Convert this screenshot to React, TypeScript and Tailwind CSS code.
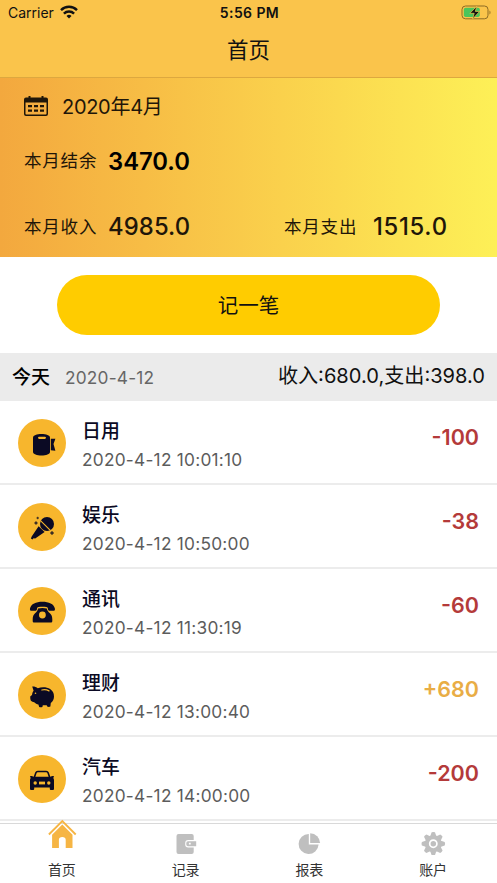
import type { ReactNode } from "react";
import clsx from "clsx";

const INK = "#0b0a24";
const AMBER = "#f7b62d";

type Entry = {
  name: string;
  time: string;
  amount: string;
  income?: boolean;
  icon: ReactNode;
};

const RollIcon = () => (
  <>
    <path d="M15 18.600c0-2.300 4-3.600 8.500-3.600s8.500 1.300 8.500 3.600V33c0 2.300-4 3.500-8.500 3.500S15 35.300 15 33Z" fill={INK} />
    <rect x="20" y="17.700" width="8" height="2.300" rx="1.150" fill={AMBER} />
    <path d="M32.800 19.800h4.600l-1.900 5.200 1.900 6.800-4.600-.6Z" fill={INK} />
  </>
);

const MicIcon = () => (
  <>
    <circle cx="29" cy="21" r="7" fill={INK} />
    <path d="m22.500 17.600 9.800 9.800" stroke={AMBER} strokeWidth="1.100" />
    <path d="m20.600 23.200 6 5.800-9.400 6.600-1.700-.3-1 1.300-1.600-1 .8-2Z" fill={INK} />
    <path d="m18 18.300.5 1.200 1.200.5-1.200.5-.5 1.200-.5-1.200-1.200-.5 1.200-.5ZM19.700 13.800l.3.900.9.300-.9.300-.3.900-.3-.9-.9-.3.900-.3ZM34 28l.5 1.500 1.500.5-1.500.5-.5 1.500-.5-1.500-1.500-.5 1.500-.5Z" fill={INK} stroke={INK} strokeWidth=".4" />
  </>
);

const PhoneIcon = () => (
  <>
    <path d="M12 21.500c1-4.700 6-6.800 12.400-6.800s11.500 2.100 12.500 6.800c.3 1.600-.3 2.300-1.500 2.300h-3.600c-1.200 0-1.800-.8-1.900-2.100-.1-1.100-.6-1.500-1.600-1.700-2.400-.4-5.300-.4-7.700 0-1 .2-1.500.6-1.600 1.700-.1 1.300-.7 2.100-1.900 2.100h-3.600c-1.200 0-1.800-.7-1.500-2.300Z" fill={INK} />
    <path d="M20 21.400q4.400-.9 8.800 0c.4 2 1.400 3.300 3.100 4.800 1.700 1.500 2.400 3.400 2.400 6v1.700c0 1-.6 1.600-1.600 1.600H16.300c-1 0-1.600-.6-1.600-1.600v-1.700c0-2.600.7-4.500 2.400-6 1.700-1.500 2.600-2.800 2.900-4.800Z" fill={INK} />
    <circle cx="24.400" cy="28" r="3.400" fill={AMBER} />
  </>
);

const PigIcon = () => (
  <>
    <path d="M14.200 15.500c2-.1 4.200.4 5.600 1.700 3.800-1.500 9.200-1.300 12.300.9 2.500 1.700 3.900 4.200 3.900 7.300 0 2.800-1.200 5-3.200 6.700l-.4 3.400q-1.600.8-3.200 0l-.5-1.300h-3.900l-.4 1.800q-1.600.7-3.200 0l-.8-2.400c-1.500-.4-3-1.100-4.200-2.400q-1.900-.5-3.300-1.500-.8-2-.7-4.200l1.800-1.400c.2-1.600.5-3.100 1.600-4.400Z" fill={INK} />
    <path d="M23.800 19c2.400-.6 5-.3 7.200.9" stroke={AMBER} strokeWidth="1.200" strokeLinecap="round" fill="none" />
    <circle cx="17.500" cy="22.300" r=".8" fill={AMBER} />
  </>
);

const CarIcon = () => (
  <>
    <path d="M16.300 22.500 17.900 17.800c.3-.9.900-1.300 1.900-1.300h8.400c1 0 1.600.4 1.900 1.300l1.600 4.700" fill="none" stroke={INK} strokeWidth="1.600" />
    <path d="M12 21.300c1.200-.5 2.500-.3 3.500.5h17c1-.8 2.300-1 3.500-.5l-.7 1.600c.6.900.7 1.600.7 2.700v8.100c0 .9-.5 1.400-1.400 1.400h-1.400c-.9 0-1.400-.5-1.400-1.400V32.500H16.200v1.200c0 .9-.5 1.400-1.400 1.400h-1.400c-.9 0-1.400-.5-1.400-1.400v-8.100c0-1.100.1-1.800.7-2.700Z" fill={INK} />
    <circle cx="17.200" cy="28" r="1.700" fill={AMBER} />
    <circle cx="30.800" cy="28" r="1.700" fill={AMBER} />
    <path d="M21 26.600h6v2.800h-6Z" fill={AMBER} />
  </>
);

const ENTRIES: Entry[] = [
  { name: "日用", time: "2020-4-12 10:01:10", amount: "-100", icon: <RollIcon /> },
  { name: "娱乐", time: "2020-4-12 10:50:00", amount: "-38", icon: <MicIcon /> },
  { name: "通讯", time: "2020-4-12 11:30:19", amount: "-60", icon: <PhoneIcon /> },
  { name: "理财", time: "2020-4-12 13:00:40", amount: "+680", income: true, icon: <PigIcon /> },
  { name: "汽车", time: "2020-4-12 14:00:00", amount: "-200", icon: <CarIcon /> },
];

const TABS: { label: string; icon: ReactNode }[] = [
  {
    label: "首页",
    icon: (
      <>
        <path d="M1.900 15.500 15.300 2.100l13.400 13.400" fill="none" stroke="#f6b544" strokeWidth="1.900" />
        <path d="M5.100 15.700 15.300 5.500l10.200 10.200V29H18.700v-8.200c0-1.900-1.300-2.800-3.400-2.800s-3.400.9-3.400 2.800v8.200H5.100Z" fill="#f6b544" />
      </>
    ),
  },
  {
    label: "记录",
    icon: (
      <>
        <path d="M7.500 15h13.200a2 2 0 0 1 2 2v4h-5.500a3 3 0 0 0-3 3v1.600a3 3 0 0 0 3 3h5.500V33a2 2 0 0 1-2 2H7.500a2 2 0 0 1-2-2V17a2 2 0 0 1 2-2Z" fill="#bfbfbf" />
        <path fillRule="evenodd" d="M17 22.200h8.200v5H17a1.700 1.700 0 0 1-1.700-1.700v-1.600a1.700 1.700 0 0 1 1.700-1.700Zm.9 1.600v1.800h1.800v-1.800Z" fill="#bfbfbf" />
      </>
    ),
  },
  {
    label: "报表",
    icon: (
      <>
        <path d="M14.800 15v10.600h9.800A10 10 0 1 1 14.800 15Z" fill="#bfbfbf" />
        <path d="M16.200 14.200a10 10 0 0 1 9.900 9.900h-9.900Z" fill="#bfbfbf" />
      </>
    ),
  },
  {
    label: "账户",
    icon: (
      <g transform="translate(15.300 24.700)">
        {[0, 45, 90, 135, 180, 225, 270, 315].map((deg) => (
          <path key={deg} d="M-3.200-7-1.700-11.400Q0-12.200 1.700-11.400L3.200-7Z" fill="#bfbfbf" transform={`rotate(${deg})`} />
        ))}
        <circle r="8.400" fill="#bfbfbf" />
        <circle r="3.600" fill="none" stroke="#fff" strokeWidth="1.700" />
      </g>
    ),
  },
];

function StatusBar() {
  return (
    <div className="grid h-[26px] grid-cols-3 items-center pl-[8px] pr-[6px] text-[14px] leading-none">
      <div className="flex items-center gap-[6px]">
        <span>Carrier</span>
        <svg className="-mt-[2px]" width="18" height="14" viewBox="0 0 18 14" fill="none" stroke="#111" strokeWidth="2.400">
          <path d="M1 5.100a11.300 11.300 0 0 1 16 0M3.900 8.600a7.200 7.200 0 0 1 10.200 0" />
          <path d="m9 13.600-2.500-2.600a3.600 3.600 0 0 1 5 0Z" fill="#111" stroke="none" />
        </svg>
      </div>
      <span className="text-center font-semibold tracking-[0.4px]">5:56 PM</span>
      <svg className="-mt-[2px] justify-self-end" width="30" height="15" viewBox="0 0 30 15">
        <rect x="1" y="1" width="26" height="12.800" rx="3.500" fill="none" stroke="#8c6b25" />
        <rect x="2.800" y="2.800" width="16" height="9.200" rx="1.800" fill="#4ac55b" />
        <path d="M28.500 5.500c1.300.7 1.300 3.300 0 4Z" fill="#8c6b25" />
        <path d="M15.800 1.200 8.900 8.300h4.300l-1.600 5.700 7-7.600h-4.300Z" fill="#111" stroke="#fac44b" strokeWidth=".7" />
      </svg>
    </div>
  );
}

function Summary() {
  return (
    <section className="h-[179px] shrink-0 bg-gradient-to-r from-[#f3a83e] to-[#fdf057] px-6 text-[#1f1609]">
      <div className="flex h-[56px] items-center gap-[14px]">
        <svg width="24" height="20" viewBox="0 0 24 20" fill="#1f1609">
          <path fillRule="evenodd" d="M2 1.500h2.500V0h2v1.500h11V0h2v1.500H22a2 2 0 0 1 2 2V18a2 2 0 0 1-2 2H2a2 2 0 0 1-2-2V3.500a2 2 0 0 1 2-2ZM1.500 6.500v11c0 .7.300 1 1 1h19c.7 0 1-.3 1-1v-11Z" />
          <path d="M4 9h4v2.300H4zM10 9h4v2.300h-4zM16 9h4v2.300h-4zM4 13.500h4v2.300H4zM10 13.500h4v2.300h-4zM16 13.500h4v2.300h-4z" />
        </svg>
        <span className="pt-px text-[20px] tracking-[-0.3px]">2020年4月</span>
      </div>
      <div className="flex h-[54px] items-center">
        <span className="w-[84px] pt-px text-[17.500px] tracking-[0.8px]">本月结余</span>
        <span className="pt-px text-[23.800px] font-semibold text-black">3470.0</span>
      </div>
      <div className="flex h-[69px] items-center pt-2">
        <span className="w-[84px] pt-[2px] text-[17.500px] tracking-[0.8px]">本月收入</span>
        <span className="w-[176px] pt-px text-[23.800px] font-medium tracking-[0.1px]">4985.0</span>
        <span className="w-[89px] pt-[2px] text-[17.500px] tracking-[0.8px]">本月支出</span>
        <span className="pt-px text-[23.800px] font-medium tracking-[0.7px]">1515.0</span>
      </div>
    </section>
  );
}

function EntryRow({ entry }: { entry: Entry }) {
  return (
    <li className="flex h-[84px] shrink-0 items-center border-b-2 border-[#ececec] px-[18px]">
      <svg className="mt-px" width="48" height="48" viewBox="0 0 48 48">
        <circle cx="24" cy="24" r="24" fill={AMBER} />
        {entry.icon}
      </svg>
      <div className="ml-4 flex-1 pt-[8px]">
        <p className="text-[18.900px] leading-[28px] font-medium text-[#0b0a24]">{entry.name}</p>
        <p className="text-[17.300px] leading-[28px] tracking-[0.240px] text-[#5c5c5c]">{entry.time}</p>
      </div>
      <span className={clsx("mb-[9px] text-[21.500px] font-semibold", entry.income ? "text-[#e9ad45]" : "text-[#b43a3a]")}>
        {entry.amount}
      </span>
    </li>
  );
}

export default function App() {
  return (
    <div className="flex h-[883px] w-[497px] flex-col overflow-hidden bg-white font-['Inter','Noto_Sans_CJK_SC',sans-serif] text-[#111]">
      <header className="h-[78px] shrink-0 border-b border-[#dda83f] bg-[#fac44b]">
        <StatusBar />
        <h1 className="text-center text-[21.500px] leading-[49px]">首页</h1>
      </header>
      <Summary />
      <div className="flex h-[96px] shrink-0 items-start pt-[18px] pl-[57px]">
        <button className="h-[60px] w-[383px] rounded-full bg-[#ffcc00] pt-[2px] text-[20.500px]">记一笔</button>
      </div>
      <div className="flex h-[48px] shrink-0 items-center bg-[#ebebeb] px-3">
        <span className="pt-[3px] text-[19px] font-medium text-black">今天</span>
        <span className="ml-[15px] pt-[2px] text-[17.300px] tracking-[0.2px] text-[#666]">2020-4-12</span>
        <span className="ml-auto pb-px text-[20.100px]">收入:680.0,支出:398.0</span>
      </div>
      <ul className="flex h-[422px] shrink-0 flex-col overflow-hidden">
        {ENTRIES.map((entry) => (
          <EntryRow key={entry.time} entry={entry} />
        ))}
      </ul>
      <nav className="grid flex-1 grid-cols-4 border-t border-[#d9d9d9] pr-[2px]">
        {TABS.map((tab) => (
          <div key={tab.label} className="flex flex-col items-center">
            <svg className="-mt-[5px] shrink-0" width="30" height="36" viewBox="0 0 30 36">
              {tab.icon}
            </svg>
            <span className="mt-[5px] text-[14px] leading-[20px] text-[#333]">{tab.label}</span>
          </div>
        ))}
      </nav>
    </div>
  );
}
